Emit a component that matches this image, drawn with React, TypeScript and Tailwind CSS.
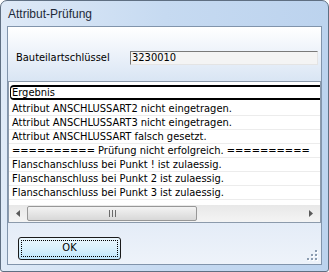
import React from 'react';

const rows = [
  'Attribut ANSCHLUSSART2 nicht eingetragen.',
  'Attribut ANSCHLUSSART3 nicht eingetragen.',
  'Attribut ANSCHLUSSART falsch gesetzt.',
  '========== Prüfung nicht erfolgreich. ==========',
  'Flanschanschluss bei Punkt ! ist zulaessig.',
  'Flanschanschluss bei Punkt 2 ist zulaessig.',
  'Flanschanschluss bei Punkt 3 ist zulaessig.',
];

function Grip() {
  const dots = [
    [8, 0],
    [4, 4],
    [8, 4],
    [0, 8],
    [4, 8],
    [8, 8],
  ];
  return (
    <svg width="11" height="11" className="absolute right-[3px] bottom-[3px]">
      {dots.map(([x, y], i) => (
        <g key={i}>
          <rect x={x + 1} y={y + 1} width="2" height="2" fill="#ffffff" />
          <rect x={x} y={y} width="2" height="2" fill="#8a9bb0" />
        </g>
      ))}
    </svg>
  );
}

export default function App() {
  return (
    <div
      className="w-[329px] h-[272px] bg-white"
      style={{ fontFamily: '"DejaVu Sans Condensed", "Liberation Sans", Arial, sans-serif' }}
    >
      <div className="w-full h-full rounded-t-[7px] rounded-b-[3px] border border-[#5f6f82] bg-gradient-to-r from-[#dfeaf7] via-[#c6daf1] to-[#bcd3ee] flex flex-col">
        <div className="h-[25px] flex items-center pl-[7px] text-[12px] text-[#1e2a3a] font-['Liberation_Sans',sans-serif]">
          Attribut-Prüfung
        </div>
        <div className="mx-[6px] mb-[6px] flex-1 border border-[#8194ab] bg-[#e4ecf7] flex flex-col">
          <div className="h-[54px] bg-gradient-to-b from-white to-[#d9e5f4] flex items-center pl-[8px] pt-[8px] text-[11px] text-black">
            <span className="w-[114px]">Bauteilartschlüssel</span>
            <div className="w-[188px] h-[14px] border-t border-l border-[#7a7a7a] border-r border-b border-r-[#e4e4e4] border-b-[#e4e4e4] bg-[#f4f4f4] leading-[12px] pl-[1px]">
              3230010
            </div>
          </div>
          <div className="h-[142px] bg-white border border-[#8c9aab] flex flex-col text-[11px] text-black">
            <div className="h-[3px]" />
            <div className="h-[15px] ml-[1px] border-t-2 border-b-2 border-l border-black rounded-l-[4px] leading-[11px] pl-[1px]">
              Ergebnis
            </div>
            <div className="h-[2px]" />
            {rows.map((r) => (
              <div
                key={r}
                className="h-[14px] border-b border-[#ececec] pl-[3px] leading-[13px] whitespace-nowrap"
              >
                {r}
              </div>
            ))}
            <div className="flex-1" />
            <div className="h-[17px] bg-gradient-to-b from-[#e8e8e8] to-[#f4f4f4] flex items-center">
              <div className="w-[18px] h-full flex items-center justify-center">
                <svg width="4" height="7">
                  <path d="M4 0 L0 3.5 L4 7 Z" fill="#5a5a5a" />
                </svg>
              </div>
              <div className="w-[170px] h-[15px] rounded-[2px] border border-[#979797] bg-gradient-to-b from-[#f3f3f3] to-[#d8d8d8] flex items-center justify-center">
                <svg width="7" height="7">
                  <rect x="0" y="0" width="1" height="7" fill="#6a6a6a" />
                  <rect x="3" y="0" width="1" height="7" fill="#6a6a6a" />
                  <rect x="6" y="0" width="1" height="7" fill="#6a6a6a" />
                </svg>
              </div>
              <div className="flex-1" />
              <div className="w-[18px] h-full flex items-center justify-center">
                <svg width="4" height="7">
                  <path d="M0 0 L4 3.5 L0 7 Z" fill="#5a5a5a" />
                </svg>
              </div>
            </div>
          </div>
          <div className="flex-1 relative bg-gradient-to-b from-[#e4ecf7] to-[#eef3fa] pl-[10px] pt-[11px]">
            <button className="w-[103px] h-[23px] rounded-[3px] border border-[#1a1a1a] bg-gradient-to-b from-[#eaf6fd] via-[#d9f0fc] to-[#bee6fd] p-[2px]">
              <div className="w-full h-full border border-dotted border-black rounded-[1px] flex items-center justify-center text-[11px] text-black">
                OK
              </div>
            </button>
            <Grip />
          </div>
        </div>
      </div>
    </div>
  );
}
